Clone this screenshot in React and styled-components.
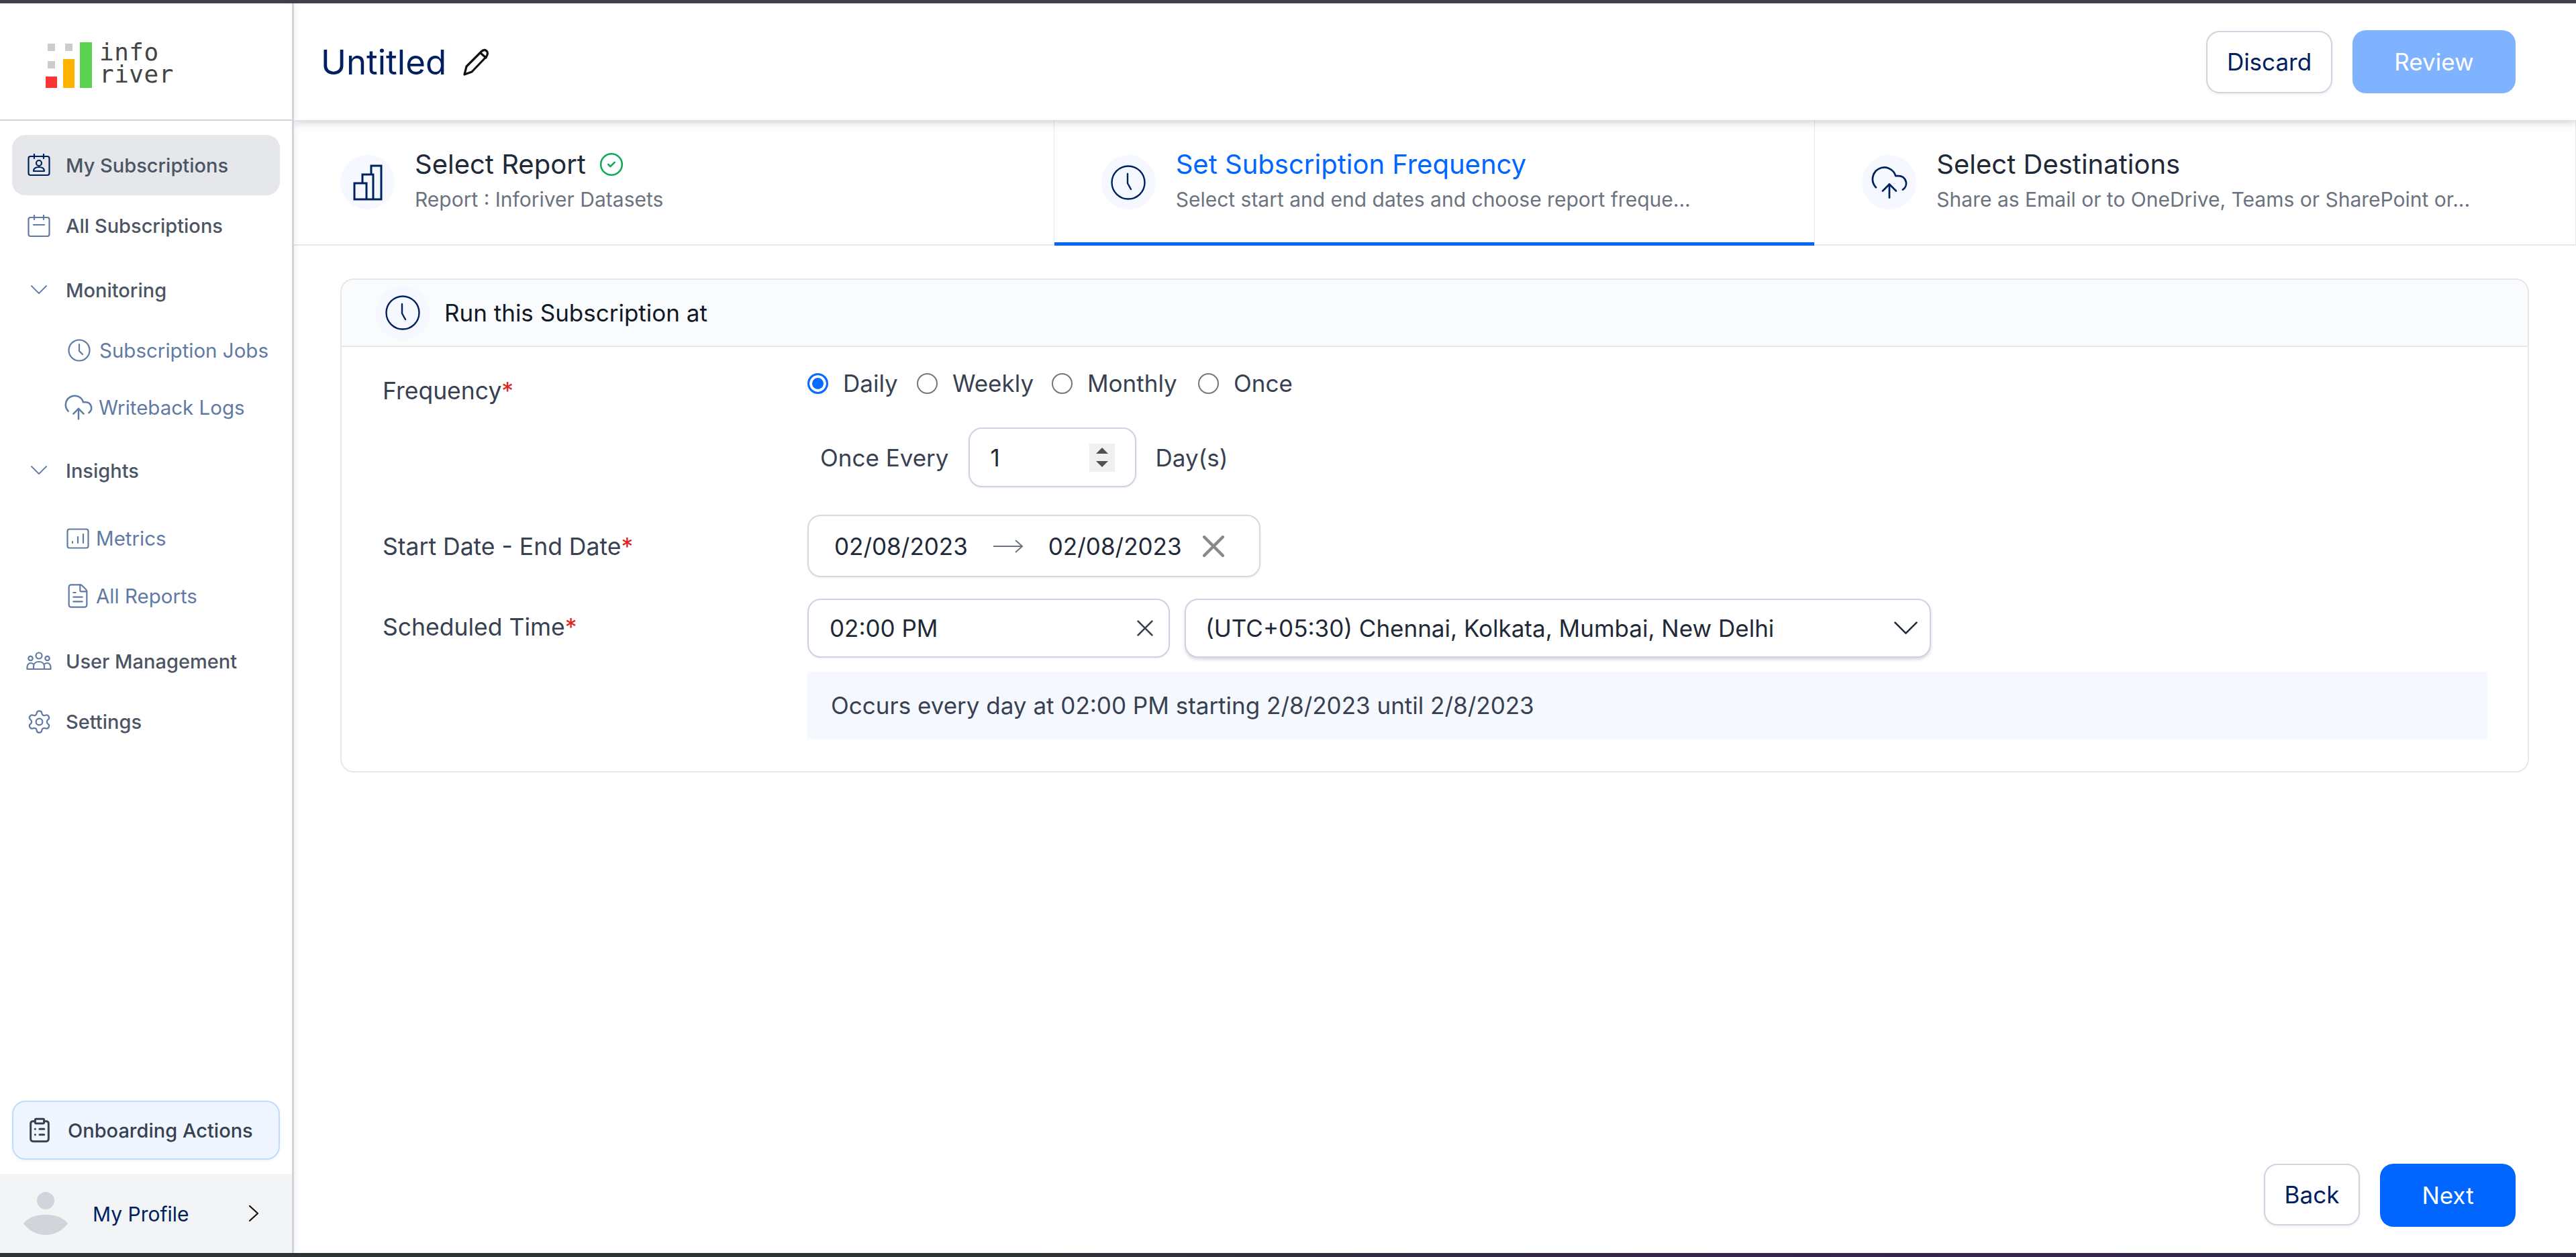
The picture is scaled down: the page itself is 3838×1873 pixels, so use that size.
import React from 'react';
import styled, { createGlobalStyle } from 'styled-components';
import { CircleCheck, CloudUpload, ClipboardList, FileText, Settings } from 'lucide-react';

const GlobalStyle = createGlobalStyle`
  html, body { margin: 0; padding: 0; background: #fff; }
  body { font-family: Inter, "Noto Sans", sans-serif; }
  * { box-sizing: border-box; }
  svg { flex: none; }
`;

const Page = styled.div`
  width: 3838px;
  height: 1873px;
  display: flex;
  flex-direction: column;
  overflow: hidden;
`;

const TopStrip = styled.div`
  height: 5px;
  background: #41434a;
`;

const BottomStrip = styled.div`
  height: 6px;
  background: linear-gradient(90deg, #2e3335 0%, #2e3335 40%, #35234d 70%, #2e2a45 100%);
`;

const Body = styled.div`
  flex: 1;
  display: flex;
  min-height: 0;
`;

const Sidebar = styled.aside`
  width: 438px;
  flex: none;
  display: flex;
  flex-direction: column;
  border-right: 3px solid #d1d5db;
  background: #fff;
  box-shadow: 2px 0 8px rgba(0, 0, 0, 0.06);
  position: relative;
  z-index: 3;
`;

const LogoBar = styled.div`
  height: 175px;
  flex: none;
  border-bottom: 2px solid #d1d5db;
  display: flex;
  align-items: flex-end;
  padding: 0 0 47px 68px;
  gap: 11px;
`;

const LogoWord = styled.div`
  font-family: "DejaVu Sans Mono", "Liberation Mono", monospace;
  font-size: 36px;
  line-height: 33px;
  letter-spacing: 0.5px;
  color: #444;
  white-space: pre;
  margin-bottom: 4px;
`;

const Nav = styled.nav`
  flex: 1;
  padding: 21px 18px 0;
`;

const NavRow = styled.div`
  height: ${p => p.$h}px;
  display: flex;
  align-items: center;
  padding-left: ${p => p.$indent}px;
  gap: ${p => p.$gap}px;
  font-size: 29px;
  font-weight: 500;
  white-space: nowrap;
  color: #4b5563;
  border-radius: 20px;
  background: ${p => (p.$active ? '#e5e7eb' : 'transparent')};
`;

const SubRow = styled(NavRow)`
  font-size: 29.5px;
  font-weight: 400;
  color: #5f7aa3;
`;

const IconSlot = styled.span`
  width: ${p => p.$w}px;
  height: 40px;
  flex: none;
  display: flex;
  align-items: center;
  justify-content: center;
`;

const OnboardingWrap = styled.div`
  padding: 0 18px 21px;
`;

const OnboardingButton = styled.div`
  height: 88px;
  display: flex;
  align-items: center;
  gap: 22px;
  padding-left: 19px;
  border: 2px solid #bfdbfe;
  border-radius: 20px;
  background: #eff6ff;
  box-shadow: 0 2px 4px rgba(0, 0, 0, 0.05);
  font-size: 29px;
  font-weight: 500;
  color: #374151;
`;

const ProfileBar = styled.div`
  height: 118px;
  flex: none;
  display: flex;
  align-items: center;
  background: #f3f4f6;
  padding-left: 35px;
  font-size: 30px;
  color: #002060;
`;

const ProfileName = styled.span`
  margin-left: 37px;
  margin-top: 2px;
  width: 233px;
`;

const Main = styled.main`
  flex: 1;
  min-width: 0;
  display: flex;
  flex-direction: column;
`;

const Header = styled.header`
  height: 174px;
  flex: none;
  display: flex;
  align-items: center;
  padding: 0 90px 0 40px;
  background: #fff;
  box-shadow: 0 3px 12px rgba(60, 70, 90, 0.28);
  position: relative;
  z-index: 2;
`;

const Title = styled.h1`
  margin: 0 25px 0 0;
  font-size: 51px;
  font-weight: 400;
  color: #002060;
`;

const HeaderSpacer = styled.div`
  flex: 1;
`;

const Button = styled.button`
  height: ${p => p.$h || 93}px;
  width: ${p => p.$w}px;
  margin-left: 30px;
  font-family: inherit;
  font-size: 35px;
  border-radius: 20px;
  border: ${p => (p.$primary ? 'none' : '2px solid #cfd4e0')};
  background: ${p => (p.$primary ? p.$bg : '#fff')};
  color: ${p => (p.$primary ? '#fff' : '#002060')};
  box-shadow: ${p => (p.$primary ? 'none' : '0 2px 4px rgba(0, 0, 0, 0.06)')};
`;

const Tabs = styled.div`
  height: 187px;
  flex: none;
  display: flex;
  border-bottom: 2px solid #e5e7eb;
`;

const Tab = styled.div`
  flex: 1;
  position: relative;
  display: flex;
  align-items: center;
  padding-left: ${p => p.$pad}px;
  gap: 30px;
  border-left: ${p => (p.$divider ? '1px solid #e5e7eb' : 'none')};
  border-right: ${p => (p.$edge ? '1px solid #e5e7eb' : 'none')};
`;

const ActiveBar = styled.div`
  position: absolute;
  left: 0;
  right: 0;
  bottom: -2px;
  height: 5px;
  background: #0066ff;
`;

const IconCircle = styled.div`
  width: ${p => p.$size}px;
  height: ${p => p.$size}px;
  flex: none;
  border-radius: 50%;
  background: #f5f8ff;
  display: flex;
  align-items: center;
  justify-content: center;
`;

const TabText = styled.div`
  display: flex;
  flex-direction: column;
  gap: 12px;
  margin-top: -7px;
`;

const TabTitle = styled.div`
  display: flex;
  align-items: center;
  gap: 19px;
  font-size: 40px;
  line-height: 46px;
  color: ${p => (p.$active ? '#0066ff' : '#1f2937')};
`;

const TabSub = styled.div`
  font-size: 30px;
  line-height: 34px;
  color: #6b7280;
  white-space: nowrap;
`;

const Content = styled.div`
  flex: 1;
  display: flex;
  flex-direction: column;
  padding: 49px 70px 0 69px;
`;

const Card = styled.section`
  border: 2px solid #e5e7eb;
  border-radius: 20px;
  height: 736px;
`;

const CardHeader = styled.div`
  height: 100px;
  display: flex;
  align-items: center;
  gap: 22px;
  padding-left: 51px;
  border-bottom: 2px solid #e5e7eb;
  background: #fafbfc;
  border-radius: 20px 20px 0 0;
  font-size: 35px;
  color: #111827;
`;

const CardBody = styled.div`
  padding: 31px 60px 0 61px;
`;

const Field = styled.div`
  display: flex;
  margin-top: ${p => p.$top || 0}px;
`;

const FieldLabel = styled.div`
  width: 633px;
  flex: none;
  padding-top: ${p => p.$top}px;
  font-size: 35.500px;
  line-height: 46px;
  color: #374151;
`;

const Required = styled.span`
  color: #e02424;
`;

const FieldControls = styled.div`
  flex: 1;
  display: flex;
  flex-direction: column;
  min-width: 0;
`;

const RadioGroup = styled.div`
  height: 46px;
  display: flex;
  align-items: center;
`;

const RadioOption = styled.label`
  width: ${p => p.$w}px;
  display: flex;
  align-items: center;
  gap: 22px;
  font-size: 35px;
  color: #374151;
`;

const RadioDot = styled.span`
  width: 31px;
  height: 31px;
  flex: none;
  border-radius: 50%;
  border: ${p => (p.$on ? '3px solid #0a6cff' : '2px solid #767676')};
  background: ${p => (p.$on ? '#0a6cff' : '#fff')};
  box-shadow: ${p => (p.$on ? 'inset 0 0 0 4px #fff' : 'none')};
`;

const OnceRow = styled.div`
  display: flex;
  align-items: center;
  margin-top: 43px;
  padding-left: 19px;
  font-size: 35px;
  color: #374151;
`;

const InputBox = styled.div`
  width: ${p => p.$w}px;
  height: ${p => p.$h}px;
  flex: none;
  display: flex;
  align-items: center;
  padding: 0 ${p => p.$right || 0}px 0 ${p => p.$left}px;
  border: 2px solid ${p => p.$border || '#cdd3e0'};
  border-radius: 20px;
  background: #fff;
  font-size: 35px;
  color: #1f2937;
  box-shadow: ${p => (p.$shadow ? '0 3px 4px rgba(80, 90, 110, 0.22)' : '0 1px 3px rgba(80, 90, 110, 0.1)')};
`;

const InlineGap = styled.span`
  display: flex;
  margin: 0 ${p => p.$right}px 0 ${p => p.$left}px;
`;

const Grow = styled.span`
  flex: 1;
`;

const Spinner = styled.span`
  width: 38px;
  height: 42px;
  background: #f0f0f0;
  display: flex;
  flex-direction: column;
  align-items: center;
  justify-content: center;
  gap: 11px;
`;

const SpinUp = styled.span`
  width: 0;
  height: 0;
  border-left: 9px solid transparent;
  border-right: 9px solid transparent;
  border-bottom: 9px solid #505050;
`;

const SpinDown = styled(SpinUp)`
  border-bottom: none;
  border-top: 9px solid #505050;
`;

const TimeRow = styled.div`
  display: flex;
  gap: 22px;
`;

const Summary = styled.div`
  height: 100px;
  margin-top: 21px;
  display: flex;
  align-items: center;
  padding-left: 35px;
  background: #f5f8ff;
  font-size: 35px;
  color: #374151;
`;

const Footer = styled.footer`
  margin-top: auto;
  margin-right: 20px;
  padding-bottom: 39px;
  display: flex;
  justify-content: flex-end;
`;

const BarsIcon = () => (
  <svg width="44" height="54" viewBox="0 0 44 54" fill="none" stroke="#002060" strokeWidth="3">
    <path d="M2 52V28h18v24zM14 28V15h16v37M30 15h-3V2h15v50H2" />
  </svg>
);

const ClockIcon = ({ size }) => (
  <svg width={size} height={size} viewBox="0 0 52 52" fill="none" stroke="#002060" strokeWidth="2.4" strokeLinecap="round">
    <circle cx="26" cy="26" r="24.5" />
    <path d="M25 13v14l5 9" />
  </svg>
);

const SmallClock = () => (
  <svg width="34" height="34" viewBox="0 0 34 34" fill="none" stroke="#5f7aa3" strokeWidth="2.2" strokeLinecap="round">
    <circle cx="17" cy="17" r="15.5" />
    <path d="M17 8v10l5 5" />
  </svg>
);

const Logo = () => (
  <svg width="69" height="69" viewBox="0 0 69 69">
    <g fill="#cccccc">
      <rect x="3" y="3" width="11" height="11" />
      <rect x="29" y="3" width="11" height="11" />
      <rect x="3" y="29" width="11" height="11" />
    </g>
    <rect x="0" y="52" width="17" height="17" fill="#ff3333" />
    <rect x="26" y="26" width="17" height="43" fill="#ffb300" />
    <rect x="51" y="1" width="18" height="68" fill="#5ad24f" />
  </svg>
);

const CalendarPerson = () => (
  <svg width="34" height="34" viewBox="0 0 34 34" fill="none" stroke="#002060" strokeWidth="2.2" strokeLinecap="round" strokeLinejoin="round">
    <rect x="1.5" y="4" width="31" height="28" rx="3" />
    <path d="M10 1v6M24 1v6" />
    <circle cx="17" cy="14" r="4" />
    <path d="M9 26c0-4 3-6 8-6s8 2 8 6z" />
  </svg>
);

const CalendarIcon = () => (
  <svg width="34" height="34" viewBox="0 0 34 34" fill="none" stroke="#5f7aa3" strokeWidth="2.2" strokeLinecap="round" strokeLinejoin="round">
    <rect x="1.5" y="4" width="31" height="28" rx="3" />
    <path d="M10 1v6M24 1v6M9 15h16" />
  </svg>
);

const UsersIcon = () => (
  <svg width="38" height="28" viewBox="0 0 38 28" fill="none" stroke="#5f7aa3" strokeWidth="2.2" strokeLinejoin="round">
    <circle cx="19" cy="6" r="4.5" />
    <circle cx="6.5" cy="10" r="3.2" />
    <circle cx="31.5" cy="10" r="3.2" />
    <path d="M11 26v-4c0-4 3-7 8-7s8 3 8 7v4z" />
    <path d="M11 26H1.500v-3c0-3 2-6 5-6 2 0 3 .4 4.500 1.500M27 26h9.500v-3c0-3-2-6-5-6-2 0-3 .4-4.500 1.500" />
  </svg>
);

const MetricsIcon = () => (
  <svg width="34" height="31" viewBox="0 0 34 31" fill="none" stroke="#5f7aa3" strokeWidth="2.2" strokeLinecap="round">
    <rect x="1.500" y="1.500" width="31" height="28" rx="3" />
    <path d="M9 22v-2M17 22v-9M25 22V9" />
  </svg>
);

const ThinArrow = () => (
  <svg width="46" height="22" viewBox="0 0 46 22" fill="none" stroke="#6b7280" strokeWidth="2">
    <path d="M1 11h43M34 2l10 9-10 9" />
  </svg>
);

const CrossIcon = ({ size, color, weight }) => (
  <svg width={size} height={size} viewBox="0 0 30 30" fill="none" stroke={color} strokeWidth={weight} strokeLinecap="round">
    <path d="M2 2l26 26M28 2L2 28" />
  </svg>
);

const ChevronDownIcon = ({ width, color, weight }) => (
  <svg width={width} height={width * 0.55} viewBox="0 0 24 13" fill="none" stroke={color} strokeWidth={weight} strokeLinecap="round" strokeLinejoin="round">
    <path d="M1 1l11 11L23 1" />
  </svg>
);

const ChevronRightIcon = () => (
  <svg width="14" height="24" viewBox="0 0 14 24" fill="none" stroke="#111" strokeWidth="2.2" strokeLinecap="round" strokeLinejoin="round">
    <path d="M1 1l12 11L1 23" />
  </svg>
);

const PencilIcon = () => (
  <svg width="41" height="41" viewBox="0 0 41 41" fill="none" stroke="#111" strokeWidth="3.2" strokeLinejoin="round" strokeLinecap="round">
    <path d="M2 39l3-12L27 5c3-3 6-3 8-1s2 6-1 9L13 35z" />
    <path d="M26 7l8 7" />
  </svg>
);

const Avatar = () => (
  <svg width="66" height="64" viewBox="0 0 66 64">
    <circle cx="33" cy="13" r="13" fill="#d1d5db" />
    <path d="M0 47c8-10 20-13 33-13s25 3 33 13c-8 11-20 17-33 17S8 58 0 47z" fill="#d1d5db" />
  </svg>
);

export default function App() {
  return (
    <Page>
      <GlobalStyle />
      <TopStrip />
      <Body>
        <Sidebar>
          <LogoBar>
            <Logo />
            <LogoWord>{'info\nriver'}</LogoWord>
          </LogoBar>
          <Nav>
            <NavRow $h={90} $indent={24} $gap={24} $active>
              <IconSlot $w={32}><CalendarPerson /></IconSlot>My Subscriptions
            </NavRow>
            <NavRow $h={91} $indent={24} $gap={24}>
              <IconSlot $w={32}><CalendarIcon /></IconSlot>All Subscriptions
            </NavRow>
            <NavRow $h={100} $indent={24} $gap={24}>
              <IconSlot $w={32}><ChevronDownIcon width={24} color="#5f7aa3" weight={2} /></IconSlot>Monitoring
            </NavRow>
            <SubRow $h={80} $indent={83} $gap={14}>
              <IconSlot $w={33}><SmallClock /></IconSlot>Subscription Jobs
            </SubRow>
            <SubRow $h={90} $indent={80} $gap={11}>
              <IconSlot $w={38}><CloudUpload size={46} strokeWidth={1.3} color="#5f7aa3" /></IconSlot>Writeback Logs
            </SubRow>
            <NavRow $h={98} $indent={24} $gap={24}>
              <IconSlot $w={32}><ChevronDownIcon width={24} color="#5f7aa3" weight={2} /></IconSlot>Insights
            </NavRow>
            <SubRow $h={104} $indent={81} $gap={11}>
              <IconSlot $w={33}><MetricsIcon /></IconSlot>Metrics
            </SubRow>
            <SubRow $h={68} $indent={81} $gap={11}>
              <IconSlot $w={33}><FileText size={40} strokeWidth={1.3} color="#5f7aa3" /></IconSlot>All Reports
            </SubRow>
            <NavRow $h={126} $indent={22} $gap={22}>
              <IconSlot $w={36}><UsersIcon /></IconSlot>User Management
            </NavRow>
            <NavRow $h={54} $indent={24} $gap={24}>
              <IconSlot $w={32}><Settings size={39} strokeWidth={1.35} color="#5f7aa3" /></IconSlot>Settings
            </NavRow>
          </Nav>
          <OnboardingWrap>
            <OnboardingButton>
              <ClipboardList size={40} strokeWidth={1.8} color="#374151" />Onboarding Actions
            </OnboardingButton>
          </OnboardingWrap>
          <ProfileBar>
            <Avatar />
            <ProfileName>My Profile</ProfileName>
            <ChevronRightIcon />
          </ProfileBar>
        </Sidebar>
        <Main>
          <Header>
            <Title>Untitled</Title>
            <PencilIcon />
            <HeaderSpacer />
            <Button $w={188}>Discard</Button>
            <Button $w={243} $h={94} $primary $bg="#80b3ff">Review</Button>
          </Header>
          <Tabs>
            <Tab $pad={69}>
              <IconCircle $size={81}><BarsIcon /></IconCircle>
              <TabText>
                <TabTitle>Select Report <CircleCheck size={38} strokeWidth={1.6} color="#0fa958" /></TabTitle>
                <TabSub>Report : Inforiver Datasets</TabSub>
              </TabText>
            </Tab>
            <Tab $pad={70} $divider>
              <IconCircle $size={81}><ClockIcon size={52} /></IconCircle>
              <TabText>
                <TabTitle $active>Set Subscription Frequency</TabTitle>
                <TabSub>Select start and end dates and choose report freque...</TabSub>
              </TabText>
              <ActiveBar />
            </Tab>
            <Tab $pad={70} $divider $edge>
              <IconCircle $size={81}><CloudUpload size={60} strokeWidth={1.1} color="#002060" /></IconCircle>
              <TabText>
                <TabTitle>Select Destinations</TabTitle>
                <TabSub>Share as Email or to OneDrive, Teams or SharePoint or...</TabSub>
              </TabText>
            </Tab>
          </Tabs>
          <Content>
            <Card>
              <CardHeader>
                <IconCircle $size={80}><ClockIcon size={52} /></IconCircle>
                Run this Subscription at
              </CardHeader>
              <CardBody>
                <Field>
                  <FieldLabel $top={12}>Frequency<Required>*</Required></FieldLabel>
                  <FieldControls>
                    <RadioGroup>
                      <RadioOption $w={163}><RadioDot $on />Daily</RadioOption>
                      <RadioOption $w={201}><RadioDot />Weekly</RadioOption>
                      <RadioOption $w={218}><RadioDot />Monthly</RadioOption>
                      <RadioOption $w={180}><RadioDot />Once</RadioOption>
                    </RadioGroup>
                    <OnceRow>
                      <InlineGap $left={0} $right={29}>Once Every</InlineGap>
                      <InputBox $w={250} $h={89} $left={31} $right={30}>
                        1<Grow /><Spinner><SpinUp /><SpinDown /></Spinner>
                      </InputBox>
                      <InlineGap $left={29} $right={0}>Day(s)</InlineGap>
                    </OnceRow>
                  </FieldControls>
                </Field>
                <Field $top={41}>
                  <FieldLabel $top={25}>Start Date - End Date<Required>*</Required></FieldLabel>
                  <InputBox $w={675} $h={93} $left={38} $right={52} $border="#d9d9dc">
                    02/08/2023
                    <InlineGap $left={37} $right={37}><ThinArrow /></InlineGap>
                    02/08/2023
                    <Grow />
                    <CrossIcon size={32} color="#888" weight={4} />
                  </InputBox>
                </Field>
                <Field $top={32}>
                  <FieldLabel $top={20}>Scheduled Time<Required>*</Required></FieldLabel>
                  <FieldControls>
                    <TimeRow>
                      <InputBox $w={540} $h={88} $left={31} $right={23}>
                        02:00 PM<Grow /><CrossIcon size={24} color="#374151" weight={3.4} />
                      </InputBox>
                      <InputBox $w={1112} $h={88} $left={29} $right={18} $shadow>
                        (UTC+05:30) Chennai, Kolkata, Mumbai, New Delhi
                        <Grow />
                        <ChevronDownIcon width={35} color="#1f2937" weight={1.8} />
                      </InputBox>
                    </TimeRow>
                    <Summary>Occurs every day at 02:00 PM starting 2/8/2023 until 2/8/2023</Summary>
                  </FieldControls>
                </Field>
              </CardBody>
            </Card>
            <Footer>
              <Button $w={143} $h={92}>Back</Button>
              <Button $w={202} $h={94} $primary $bg="#0066ff">Next</Button>
            </Footer>
          </Content>
        </Main>
      </Body>
      <BottomStrip />
    </Page>
  );
}
